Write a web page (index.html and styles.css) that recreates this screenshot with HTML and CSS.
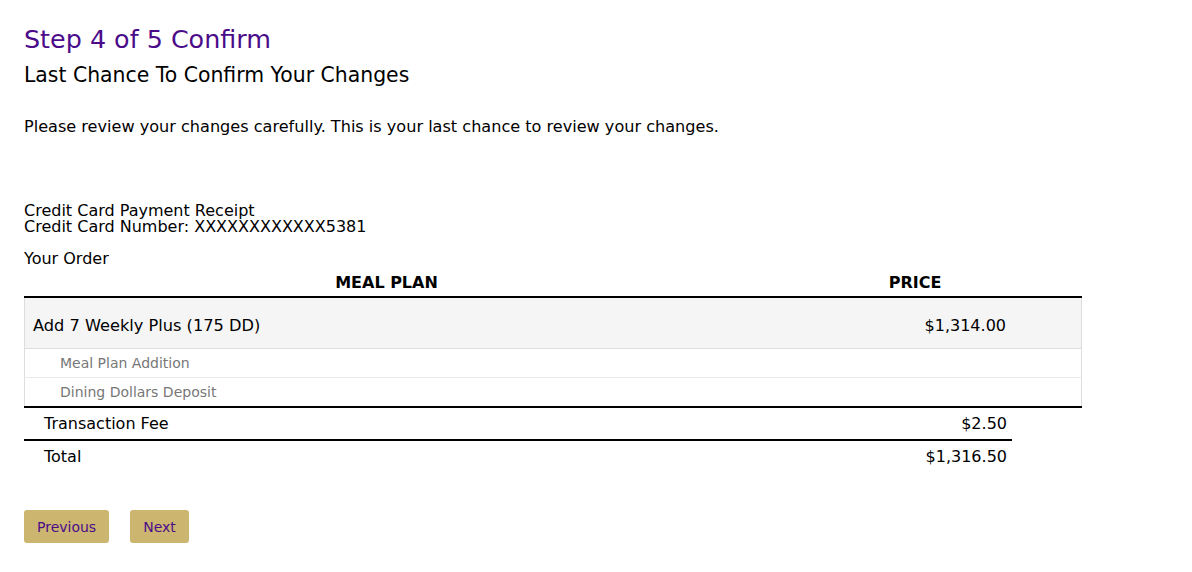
FILE: index.html
```html
<!DOCTYPE html>
<html>
<head>
<meta charset="utf-8">
<link rel="stylesheet" href="styles.css">
</head>
<body>
<div class="page">
  <h1 class="title">Step 4 of 5 Confirm</h1>
  <h2 class="subtitle">Last Chance To Confirm Your Changes</h2>
  <p class="intro">Please review your changes carefully. This is your last chance to review your changes.</p>
  <div class="receipt">
    <div>Credit Card Payment Receipt</div>
    <div>Credit Card Number: XXXXXXXXXXXX5381</div>
  </div>
  <div class="order-label">Your Order</div>
  <table class="order">
    <thead>
      <tr><th class="col-plan">MEAL PLAN</th><th class="col-price">PRICE</th></tr>
    </thead>
    <tbody>
      <tr class="main-row"><td>Add 7 Weekly Plus (175 DD)</td><td class="amount">$1,314.00</td></tr>
      <tr class="sub-row"><td>Meal Plan Addition</td><td></td></tr>
      <tr class="sub-row last"><td>Dining Dollars Deposit</td><td></td></tr>
    </tbody>
  </table>
  <table class="totals">
    <tr class="fee"><td>Transaction Fee</td><td class="amount">$2.50</td></tr>
    <tr class="total"><td>Total</td><td class="amount">$1,316.50</td></tr>
  </table>
  <div class="actions">
    <button class="btn">Previous</button>
    <button class="btn">Next</button>
  </div>
</div>
</body>
</html>
```
FILE: styles.css
```css
html, body { margin: 0; padding: 0; background: #fff; }
body { font-family: "DejaVu Sans", Verdana, sans-serif; color: #000; }
.page { padding: 23px 24px; }
.title { margin: 0; font-size: 25.4px; font-weight: normal; color: #4b0c8a; line-height: 32px; }
.subtitle { margin: 7px 0 0; font-size: 20.4px; font-weight: normal; line-height: 26px; }
.intro { margin: 29px 0 0; font-size: 16.1px; line-height: 20px; }
.receipt { margin-top: 66px; font-size: 16px; line-height: 16px; }
.order-label { margin-top: 14px; font-size: 16px; line-height: 20px; }
.order { width: 1058px; border-collapse: collapse; font-size: 16px; margin-top: 5px; }
.order th { font-weight: bold; padding: 0 0 4px; line-height: 18px; border-bottom: 2px solid #000; }
.col-plan { width: 724px; text-align: center; }
.col-price { text-align: center; }
.order tbody td { border-left: 1px solid #ddd; border-right: 1px solid #ddd; }
.order tbody td + td { border-left: none; }
.order tbody td:first-child { border-right: none; }
.main-row td { background: #f5f5f5; height: 46px; padding: 4px 8px 0; border-top: 2px solid #ccc; border-bottom: 1px solid #ddd; }
.main-row td:first-child { font-size: 16.2px; }
.main-row .amount { text-align: right; padding-right: 75px; }
.sub-row td { height: 28px; padding: 0 0 0 35px; font-size: 14px; color: #777; border-bottom: 1px solid #e8e8e8; }
.sub-row.last td { border-bottom: 2px solid #000; }
.totals { width: 988px; border-collapse: collapse; font-size: 16px; }
.totals td { padding: 0 0 0 20px; height: 31px; }
.totals .amount { text-align: right; padding: 0 5px 0 0; }
.fee td { border-bottom: 2px solid #000; }
.actions { margin-top: 38px; display: flex; gap: 21px; }
.btn { background: #cbb56f; color: #4b0c8a; border: none; border-radius: 3px; font-family: "DejaVu Sans", Verdana, sans-serif; font-size: 14px; height: 33px; padding: 0 13px; }
```
